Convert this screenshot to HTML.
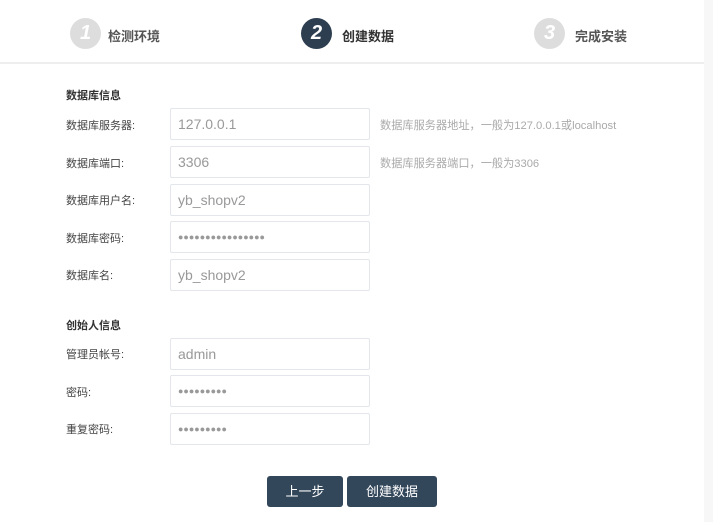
<!DOCTYPE html>
<html><head><meta charset="utf-8"><style>
*{margin:0;padding:0;box-sizing:border-box}
body{width:713px;height:522px;background:#fff;font-family:"Liberation Sans","Noto Sans CJK SC",sans-serif;position:relative;overflow:hidden;color:#333}
.strip{position:absolute;left:704px;top:0;width:9px;height:522px;background:#f7f7f7}
.hb{position:absolute;left:0;top:62px;width:704px;height:2px;background:#eeeeee}
.c{position:absolute;width:31px;height:31px;border-radius:50%;background:#ddd;color:#fff;font:italic bold 20px "Liberation Sans",sans-serif;text-align:center;line-height:31px}
.c.a{background:#2d3e50}
.st{position:absolute;font-size:13px;color:#555;top:26px;font-weight:bold}
.st.a{color:#333}
.t{position:absolute;left:66px;font-size:11px;font-weight:bold;color:#333}
.l{position:absolute;left:66px;font-size:11px;color:#444}
.i{position:absolute;left:170px;width:200px;height:32px;border:1px solid #e3e6ea;border-radius:2px;font-size:14px;color:#999;padding-left:7px;line-height:30px}
.i.p{font-size:9px;color:#999}
.h{position:absolute;left:380px;font-size:11.2px;color:#aaa}
.b{position:absolute;top:476px;height:31px;background:#33475b;color:#fff;font-size:13px;text-align:center;line-height:31px;border-radius:3px}
</style></head><body>
<div class="strip"></div>
<div class="c" style="left:70px;top:18px">1</div><div class="st" style="left:108px">检测环境</div>
<div class="c a" style="left:301px;top:18px">2</div><div class="st a" style="left:342px">创建数据</div>
<div class="c" style="left:534px;top:18px">3</div><div class="st" style="left:575px">完成安装</div>
<div class="hb"></div>
<div class="t" style="top:87px">数据库信息</div>
<div class="l" style="top:117px">数据库服务器:</div><div class="i" style="top:108px">127.0.0.1</div><div class="h" style="top:117px">数据库服务器地址，一般为127.0.0.1或localhost</div>
<div class="l" style="top:155px">数据库端口:</div><div class="i" style="top:146px">3306</div><div class="h" style="top:155px">数据库服务器端口，一般为3306</div>
<div class="l" style="top:192px">数据库用户名:</div><div class="i" style="top:184px">yb_shopv2</div>
<div class="l" style="top:230px">数据库密码:</div><div class="i p" style="top:221px">●●●●●●●●●●●●●●●●</div>
<div class="l" style="top:267px">数据库名:</div><div class="i" style="top:259px">yb_shopv2</div>
<div class="t" style="top:317px">创始人信息</div>
<div class="l" style="top:346px">管理员帐号:</div><div class="i" style="top:338px">admin</div>
<div class="l" style="top:384px">密码:</div><div class="i p" style="top:375px">●●●●●●●●●</div>
<div class="l" style="top:421px">重复密码:</div><div class="i p" style="top:413px">●●●●●●●●●</div>
<div class="b" style="left:267px;width:76px">上一步</div>
<div class="b" style="left:347px;width:90px">创建数据</div>
</body></html>
